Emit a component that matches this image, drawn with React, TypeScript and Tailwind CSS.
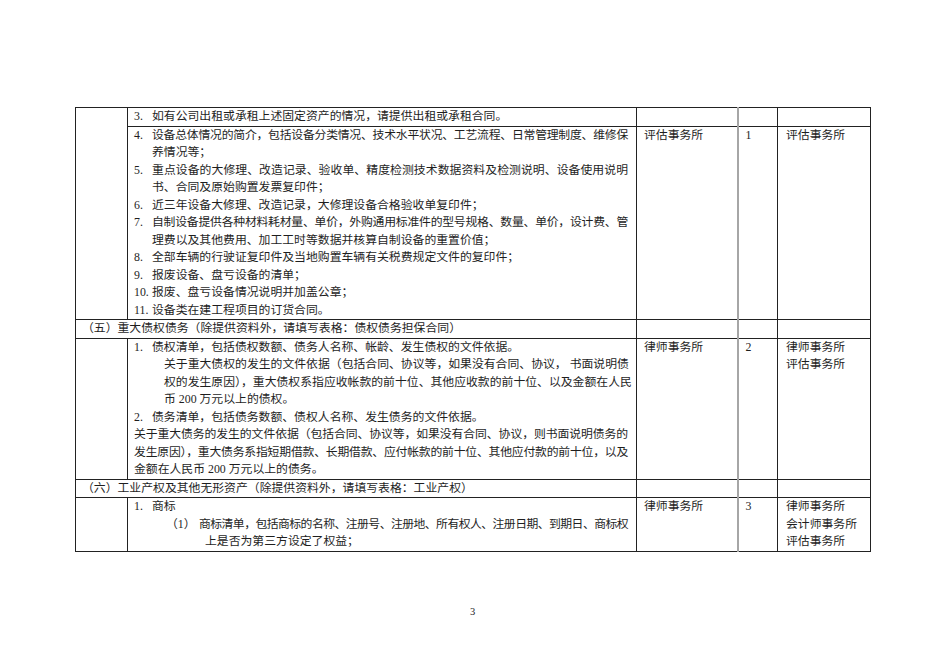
import type { ReactNode } from 'react'

const td = 'border border-[#222] align-top p-0'
const c2 = `${td} pl-[6px] pr-[8px]`
const c3 = `${td} pl-[7px] border-r-2 border-r-[#a6a6a6]`
const c4 = `${td} pl-[7px] border-l-2 border-l-[#a6a6a6]`
const c5 = `${td} pl-[8px]`

function Ln({ children, full = false, className = '' }: { children: ReactNode; full?: boolean; className?: string }) {
  return (
    <div className={`whitespace-nowrap ${full ? 'text-justify [text-align-last:justify]' : ''} ${className}`}>
      {children}
    </div>
  )
}

function Item({ num, children }: { num: string; children: ReactNode }) {
  return (
    <div className="flex">
      <span className="w-[18px] shrink-0">{num}</span>
      <div className="flex-1 min-w-0">{children}</div>
    </div>
  )
}

export default function App() {
  return (
    <div
      lang="zh-CN"
      className="w-[950px] h-[672px] bg-white text-[#1e1e1e] text-[11.85px] leading-[17.5px] font-['Liberation_Serif','Noto_Sans_CJK_SC',serif] pt-[107px] pl-[75px]"
    >
      <table className="table-fixed border-collapse w-[795px]">
        <colgroup>
          <col className="w-[52px]" />
          <col className="w-[509px]" />
          <col className="w-[101px]" />
          <col className="w-[40px]" />
          <col className="w-[93px]" />
        </colgroup>
        <tbody>
          <tr>
            <td rowSpan={2} className={td} />
            <td className={c2}>
              <Item num="3.">
                <Ln>如有公司出租或承租上述固定资产的情况，请提供出租或承租合同。</Ln>
              </Item>
            </td>
            <td className={c3} />
            <td className={c4} />
            <td className={c5} />
          </tr>
          <tr>
            <td className={c2}>
              <Item num="4.">
                <Ln full className="tracking-[-0.25px]">设备总体情况的简介，包括设备分类情况、技术水平状况、工艺流程、日常管理制度、维修保</Ln>
                <Ln>养情况等；</Ln>
              </Item>
              <Item num="5.">
                <Ln full>重点设备的大修理、改造记录、验收单、精度检测技术数据资料及检测说明、设备使用说明</Ln>
                <Ln>书、合同及原始购置发票复印件；</Ln>
              </Item>
              <Item num="6.">
                <Ln>近三年设备大修理、改造记录，大修理设备合格验收单复印件；</Ln>
              </Item>
              <Item num="7.">
                <Ln full className="tracking-[-0.25px]">自制设备提供各种材料耗材量、单价，外购通用标准件的型号规格、数量、单价，设计费、管</Ln>
                <Ln>理费以及其他费用、加工工时等数据并核算自制设备的重置价值；</Ln>
              </Item>
              <Item num="8.">
                <Ln>全部车辆的行驶证复印件及当地购置车辆有关税费规定文件的复印件；</Ln>
              </Item>
              <Item num="9.">
                <Ln>报废设备、盘亏设备的清单；</Ln>
              </Item>
              <Item num="10.">
                <Ln>报废、盘亏设备情况说明并加盖公章；</Ln>
              </Item>
              <Item num="11.">
                <Ln>设备类在建工程项目的订货合同。</Ln>
              </Item>
            </td>
            <td className={c3}>评估事务所</td>
            <td className={c4}>1</td>
            <td className={c5}>评估事务所</td>
          </tr>
          <tr>
            <td colSpan={2} className={`${td} pl-[6px]`}>
              （五）重大债权债务（除提供资料外，请填写表格：债权债务担保合同）
            </td>
            <td className={c3} />
            <td className={c4} />
            <td className={c5} />
          </tr>
          <tr>
            <td className={td} />
            <td className={c2}>
              <Item num="1.">
                <Ln>债权清单，包括债权数额、债务人名称、帐龄、发生债权的文件依据。</Ln>
              </Item>
              <div className="pl-[30px]">
                <Ln full>关于重大债权的发生的文件依据（包括合同、协议等，如果没有合同、协议， 书面说明债</Ln>
                <Ln full>权的发生原因），重大债权系指应收帐款的前十位、其他应收款的前十位、以及金额在人民</Ln>
                <Ln>币 200 万元以上的债权。</Ln>
              </div>
              <Item num="2.">
                <Ln>债务清单，包括债务数额、债权人名称、发生债务的文件依据。</Ln>
              </Item>
              <Ln full className="tracking-[-0.1px]">关于重大债务的发生的文件依据（包括合同、协议等，如果没有合同、协议，则书面说明债务的</Ln>
              <Ln full className="tracking-[-0.35px]">发生原因），重大债务系指短期借款、长期借款、应付帐款的前十位、其他应付款的前十位，以及</Ln>
              <Ln>金额在人民币 200 万元以上的债务。</Ln>
            </td>
            <td className={c3}>律师事务所</td>
            <td className={c4}>2</td>
            <td className={c5}>
              <div>律师事务所</div>
              <div>评估事务所</div>
            </td>
          </tr>
          <tr>
            <td colSpan={2} className={`${td} pl-[6px]`}>
              （六）工业产权及其他无形资产（除提供资料外，请填写表格：工业产权）
            </td>
            <td className={c3} />
            <td className={c4} />
            <td className={c5} />
          </tr>
          <tr>
            <td className={td} />
            <td className={c2}>
              <Item num="1.">
                <Ln>商标</Ln>
              </Item>
              <div className="flex pl-[32px]">
                <span className="w-[33px] shrink-0">（1）</span>
                <div className="flex-1 min-w-0">
                  <Ln full className="tracking-[-0.6px]">商标清单，包括商标的名称、注册号、注册地、所有权人、注册日期、到期日、商标权</Ln>
                  <Ln className="pl-[6px]">上是否为第三方设定了权益；</Ln>
                </div>
              </div>
            </td>
            <td className={c3}>律师事务所</td>
            <td className={c4}>3</td>
            <td className={c5}>
              <div>律师事务所</div>
              <div>会计师事务所</div>
              <div>评估事务所</div>
            </td>
          </tr>
        </tbody>
      </table>
      <div className="w-[795px] mt-[54px] text-center text-[10.5px] leading-[12px]">3</div>
    </div>
  )
}
